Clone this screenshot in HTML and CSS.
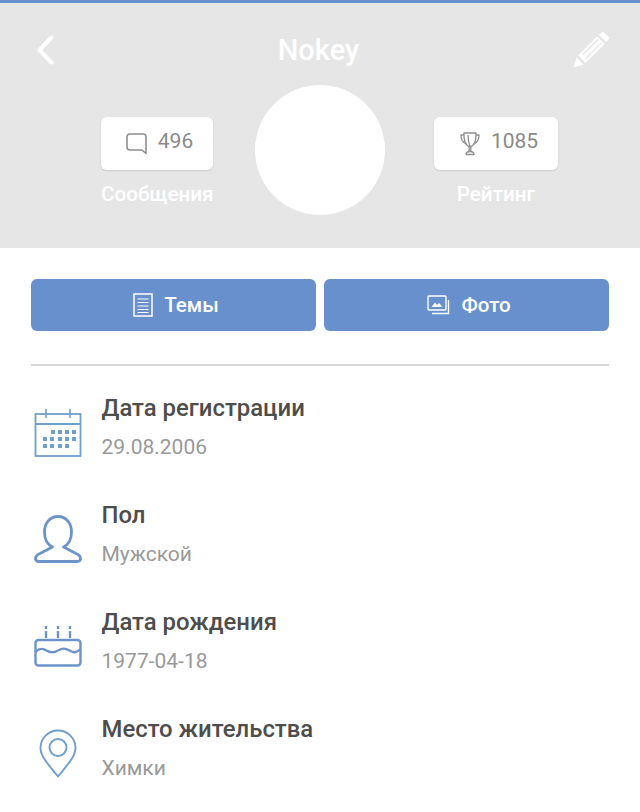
FILE: index.html
```html
<!DOCTYPE html>
<html lang="ru">
<head>
    <meta charset="UTF-8">
    <meta name="viewport" content="width=device-width, initial-scale=1.0">
    <title>Nokey</title>
    <link rel="stylesheet" href="styles.css">
</head>
<body>
    <header class="profile">
        <div class="topbar">
            <svg class="back" width="18" height="30" viewBox="0 0 18 30"><path d="M15.500 2.500 3.500 15l12 12.500" fill="none" stroke="#fff" stroke-width="4" stroke-linecap="round" stroke-linejoin="round"/></svg>
            <h1 class="name">Nokey</h1>
            <svg class="edit" width="36" height="36" viewBox="0 0 36 36"><path d="M0.500 35.500 3.500 25.500 10.500 32.500Z" fill="#fff"/><path d="M5 23.500 24 4.500 31.500 12 12.500 31Z" fill="#fff"/><path d="M9.800 22.600 25.200 7.200M13.200 26 28.600 10.600" stroke="#e6e6e6" stroke-width="1.300"/><path d="M25.800 2.700 28 0.800a2.500 2.500 0 0 1 3.400 0L35.200 4.600a2.500 2.500 0 0 1 0 3.400L33.300 10.200Z" fill="#fff"/></svg>
        </div>
        <div class="stats">
            <div class="stat">
                <div class="pill">
                    <svg width="23" height="23" viewBox="0 0 23 23"><path d="M5 2h13a3 3 0 0 1 3 3v16.500L17 18H5a3 3 0 0 1-3-3V5a3 3 0 0 1 3-3Z" fill="none" stroke="#8f8f8f" stroke-width="1.600" stroke-linejoin="round"/></svg>
                    <span>496</span>
                </div>
                <div class="stat-label">Сообщения</div>
            </div>
            <div class="avatar"></div>
            <div class="stat stat-wide">
                <div class="pill">
                    <svg width="20" height="24" viewBox="0 0 20 24"><g fill="none" stroke="#8f8f8f" stroke-width="1.300" stroke-linejoin="round"><path d="M4 1h12c.3 6-1 11-4.500 13.500h-3C5 12 3.700 7 4 1Z"/><path d="M4 3H1c0 4 2 7.500 5 9M16 3h3c0 4-2 7.500-5 9"/><path d="M8 3c0 4 .7 8 2 11.500"/><path d="M9.200 14.500v5M10.800 14.500v5M6 22.500c0-2 2-3 4-3s4 1 4 3Z"/></g></svg>
                    <span>1085</span>
                </div>
                <div class="stat-label">Рейтинг</div>
            </div>
        </div>
    </header>

    <main class="content">
        <div class="actions">
            <a class="btn">
                <svg width="20" height="24" viewBox="0 0 20 24"><g fill="none" stroke="#fff"><rect x="1" y="1" width="18" height="22" stroke-width="1.500"/><path d="M4.500 6h11M4.500 9.500h11M4.500 13h11M4.500 16.500h11M4.500 19.500h11" stroke-width="1.200"/></g></svg>
                Темы
            </a>
            <a class="btn">
                <svg width="23" height="20" viewBox="0 0 23 20"><g fill="none" stroke="#fff" stroke-width="1.400"><rect x="1" y="1" width="18" height="14" rx="1"/><path d="M21.500 5v13.500H5"/></g><path d="M4.500 12 8 7.500l2 2.500 2-2 3.500 4Z" fill="#fff"/></svg>
                Фото
            </a>
        </div>
        <hr class="divider">

        <div class="row">
            <div class="row-icon">
                <svg width="48" height="49" viewBox="0 0 48 49"><g fill="none" stroke="#6f9fcb" stroke-width="1.800"><rect x="1.500" y="6" width="45" height="42"/><path d="M1.500 16h45"/><path d="M12 1v9M36 1v9" stroke-width="1.600"/></g><g fill="#6f9fcb"><rect x="17" y="22" width="4" height="4"/><rect x="24" y="22" width="4" height="4"/><rect x="31" y="22" width="4" height="4"/><rect x="38" y="22" width="4" height="4"/><rect x="9" y="29" width="4" height="4"/><rect x="16" y="29" width="4" height="4"/><rect x="24" y="29" width="4" height="4"/><rect x="31" y="29" width="4" height="4"/><rect x="38" y="29" width="4" height="4"/><rect x="9" y="36" width="4" height="4"/><rect x="16" y="36" width="4" height="4"/><rect x="24" y="36" width="4" height="4"/><rect x="31" y="36" width="4" height="4"/></g></svg>
            </div>
            <div class="row-text">
                <div class="row-title">Дата регистрации</div>
                <div class="row-value">29.08.2006</div>
            </div>
        </div>

        <div class="row">
            <div class="row-icon">
                <svg width="48" height="48" viewBox="0 0 48 48"><path d="M18.500 32C13.500 29.500 10.500 24 10.500 17 10.500 8 16 1.500 24 1.500S37.500 8 37.500 17c0 7-3 12.500-8 15L42 38.500c3.500 1.600 4.500 3.500 4.500 5 0 2.200-1.500 3-3.500 3H5c-2 0-3.500-.8-3.500-3 0-1.500 1-3.400 4.500-5Z" fill="none" stroke="#6d94c9" stroke-width="2.800" stroke-linejoin="round"/></svg>
            </div>
            <div class="row-text">
                <div class="row-title">Пол</div>
                <div class="row-value">Мужской</div>
            </div>
        </div>

        <div class="row">
            <div class="row-icon">
                <svg width="48" height="42" viewBox="0 0 48 42"><g fill="none" stroke="#6d94c9" stroke-width="2.400"><rect x="1.500" y="15" width="45" height="25.500" rx="3"/><path d="M1.500 27c4-4 7-4 11-1.500s7 2.500 11.500 0 7-2.500 11.500 0 7 2.500 11-1.500"/><path d="M12 1v12M24 1v12M36 1v12" stroke-dasharray="3 2 7 0"/></g></svg>
            </div>
            <div class="row-text">
                <div class="row-title">Дата рождения</div>
                <div class="row-value">1977-04-18</div>
            </div>
        </div>

        <div class="row">
            <div class="row-icon">
                <svg width="38" height="49" viewBox="0 0 38 49"><g fill="none" stroke="#6f9fcb" stroke-width="1.900"><path d="M19 47.500C9 35 1.500 27.500 1.500 19a17.500 17.500 0 0 1 35 0c0 8.500-7.500 16-17.500 28.500Z" stroke-linejoin="round"/><circle cx="19" cy="18.500" r="8.500"/></g></svg>
            </div>
            <div class="row-text">
                <div class="row-title">Место жительства</div>
                <div class="row-value">Химки</div>
            </div>
        </div>
    </main>
</body>
</html>
```

FILE: styles.css
```css
* {
    margin: 0;
    padding: 0;
    box-sizing: border-box;
}

body {
    font-family: Roboto, 'Liberation Sans', sans-serif;
    background-color: #fff;
    overflow: hidden;
}

.profile {
    height: 248px;
    background-color: #e6e6e6;
    border-top: 3px solid #6790cc;
}

.topbar {
    display: flex;
    align-items: center;
    justify-content: space-between;
    height: 82px;
    padding: 14px 31px 0 36px;
}

.back {
    margin-top: -2px;
}

.name {
    font-size: 29px;
    font-weight: 500;
    line-height: 34px;
    color: #fff;
    margin-left: 10px;
    margin-top: -2px;
}

.edit {
    margin-top: -3px;
}

.stats {
    display: flex;
    align-items: flex-start;
    padding-left: 101px;
}

.stat {
    width: 112px;
    padding-top: 32px;
}

.stat-wide {
    width: 124px;
}

.pill {
    display: flex;
    align-items: center;
    justify-content: center;
    gap: 10px;
    height: 53px;
    padding-left: 4px;
    background-color: #fff;
    border-radius: 6px;
    box-shadow: 0 1px 2px rgba(0, 0, 0, 0.12);
    color: #8a8a8a;
    font-size: 21px;
}

.stat-wide .pill {
    gap: 11px;
    padding-left: 6px;
}

.pill span {
    margin-top: -5px;
}

.stat-label {
    margin-top: 12px;
    font-size: 20.700px;
    font-weight: 500;
    line-height: 24px;
    text-align: center;
    color: #fff;
    white-space: nowrap;
}

.avatar {
    width: 130px;
    height: 130px;
    border-radius: 50%;
    background-color: #fff;
    margin: 0 49px 0 42px;
}

.content {
    padding: 31px 31px 0;
}

.actions {
    display: flex;
    gap: 8px;
}

.btn {
    flex: 1;
    display: flex;
    align-items: center;
    justify-content: center;
    gap: 11px;
    height: 52px;
    padding-left: 5px;
    background-color: #6790cc;
    border-radius: 6px;
    color: #fff;
    font-size: 20.500px;
    font-weight: 500;
}

.divider {
    border: none;
    height: 2px;
    background-color: #d8d8d8;
    margin: 33px 0 28px;
}

.row {
    display: flex;
    height: 107px;
}

.row-icon {
    flex: 0 0 70.500px;
    display: flex;
    align-items: center;
    justify-content: center;
    padding-right: 16.500px;
    height: 76px;
}

.row-title {
    font-size: 23.900px;
    font-weight: 500;
    line-height: 28px;
    color: #4d4d4d;
}

.row-value {
    margin-top: 11px;
    font-size: 21px;
    line-height: 28px;
    color: #999;
}
```
